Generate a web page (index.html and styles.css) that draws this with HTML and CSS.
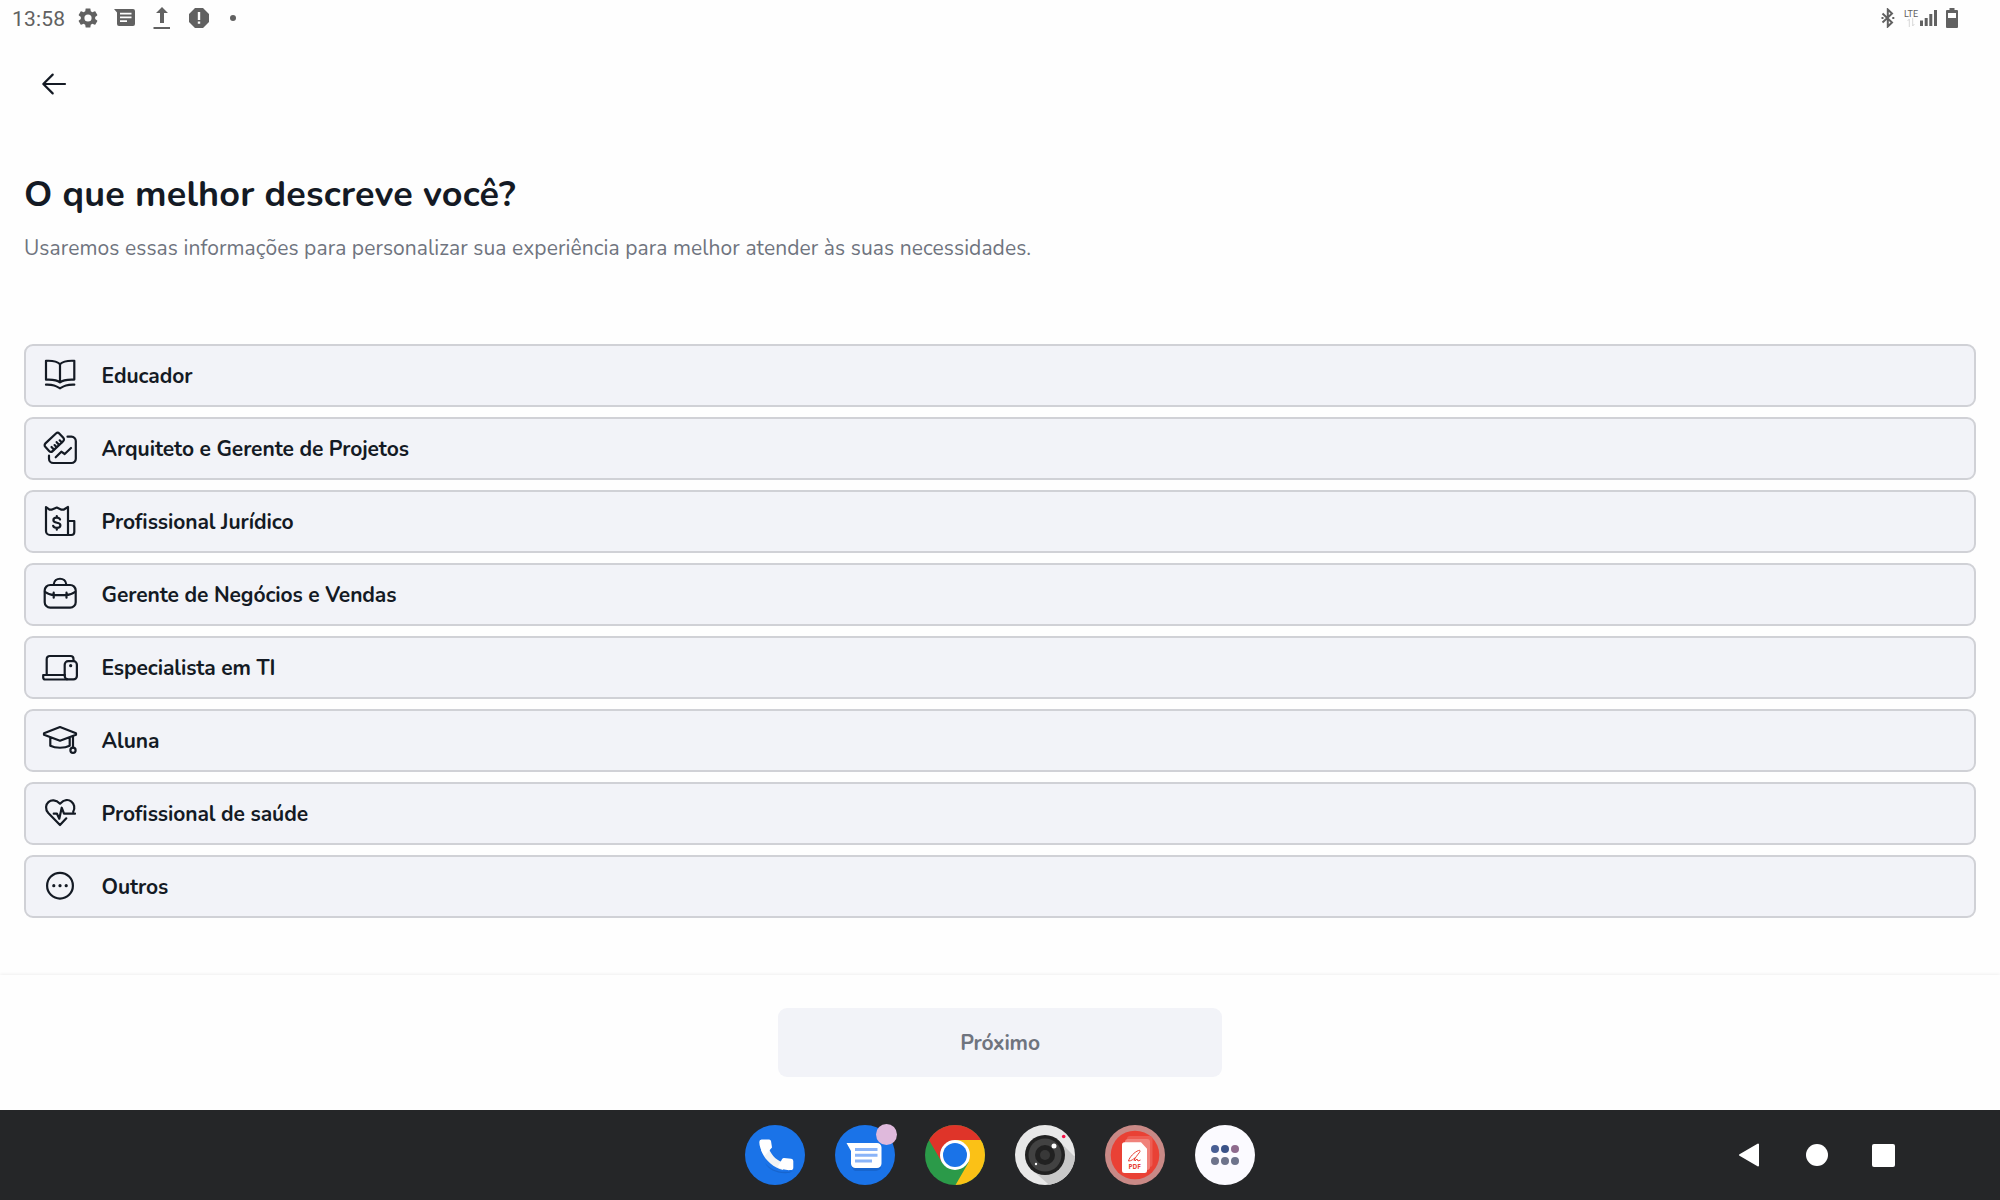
FILE: index.html
```html
<!DOCTYPE html>
<html lang="pt-BR">
<head>
<meta charset="utf-8">
<title>O que melhor descreve você?</title>
<link rel="stylesheet" href="styles.css">
</head>
<body>
<div class="statusbar">
  <div class="status-left">
    <span class="clock">13:58</span>
    <svg class="gear" width="24" height="24" viewBox="0 0 24 24"><path d="M19.140 12.940c.04-.3.06-.61.06-.94 0-.32-.02-.64-.07-.94l2.030-1.580c.18-.14.23-.41.12-.61l-1.920-3.320c-.12-.22-.37-.29-.59-.22l-2.390.96c-.5-.38-1.030-.7-1.620-.94l-.36-2.540c-.04-.24-.24-.41-.48-.41h-3.840c-.24 0-.43.17-.47.41l-.36 2.540c-.59.24-1.130.57-1.620.94l-2.390-.96c-.22-.08-.47 0-.59.22L2.740 8.870c-.12.21-.08.47.12.61l2.030 1.580c-.05.3-.09.63-.09.94s.02.64.07.94l-2.030 1.580c-.18.14-.23.41-.12.61l1.920 3.320c.12.22.37.29.59.22l2.390-.96c.5.38 1.030.7 1.620.94l.36 2.540c.05.24.24.41.48.41h3.840c.24 0 .44-.17.47-.41l.36-2.540c.59-.24 1.130-.56 1.620-.94l2.390.96c.22.08.47 0 .59-.22l1.920-3.320c.12-.22.07-.47-.12-.61l-2.010-1.580zM12 15.600A3.600 3.600 0 1 1 12 8.400a3.600 3.600 0 0 1 0 7.200z"/></svg>
    <svg class="chat" width="22" height="18" viewBox="0 0 22 18"><path fill-rule="evenodd" d="M0 0h19a2 2 0 0 1 2 2v13a2 2 0 0 1-2 2H5a2 2 0 0 1-2-2V3.500zM6 3.700v1.800h11.500V3.700zm0 3.700v1.800h11.500V7.400zm0 3.800V13h7v-1.800z"/></svg>
    <svg class="upload" width="18" height="24" viewBox="0 0 18 24"><path d="M9 1l6 6h-4v10H7V7H3zM.500 21h16.500v2H.500z"/></svg>
    <svg class="alert" width="20" height="20" viewBox="0 0 20 20"><path fill-rule="evenodd" d="M6 0h8l6 6v8l-6 6H6l-6-6V6zM8.800 4v8h2.400V4zm0 9.500v2.300h2.400v-2.300z"/></svg>
    <i class="more-dot"></i>
  </div>
  <div class="status-right">
    <svg width="14" height="20" viewBox="0 0 14 20"><path class="line" d="M1.500 5.500l9.500 9L6.800 18.500V1.500L11 5.500l-9.500 9"/><path d="M.5 9h2v2h-2zM11.300 9h2v2h-2z"/></svg>
    <div class="lte"><span>LTE</span><svg width="8" height="9" viewBox="0 0 8 9"><path d="M2.300 9V1M5.700 0v8M.6 3l1.700-2M7.400 6L5.700 8"/></svg></div>
    <svg class="signal" width="17" height="16" viewBox="0 0 17 16"><path d="M0 10.500h3V16H0zM4.700 8h3v8h-3zM9.300 4h3v12h-3zM14 0h3v16h-3z"/></svg>
    <svg width="12" height="20" viewBox="0 0 12 20"><path fill-rule="evenodd" d="M3.500 0h5v2H11a1 1 0 0 1 1 1v16a1 1 0 0 1-1 1H1a1 1 0 0 1-1-1V3a1 1 0 0 1 1-1h2.500zM2 5v5h8V5z"/></svg>
  </div>
</div>

<main class="page">
  <svg class="back" width="26" height="24" viewBox="0 0 26 24"><path d="M24 12H2.500M11.700 2.600L2.300 12l9.400 9.400"/></svg>
  <h1>O que melhor descreve você?</h1>
  <p class="lead">Usaremos essas informações para personalizar sua experiência para melhor atender às suas necessidades.</p>

  <div class="options">
    <div class="option">
      <svg viewBox="0 0 36 36"><path d="M4 4.800C10 4.500 15 5 18 8.200 21 5 26 4.500 32.300 4.800V23.600C26 23.300 21 23.600 18 26.400 15 23.600 10 23.300 4 23.600ZM18 8.200V26.400M4 28.700C12 28.500 14 30 18 32.300 22 30 24 28.500 32.300 28.700"/></svg>
      <span>Educador</span>
    </div>
    <div class="option">
      <svg viewBox="0 0 36 36"><g transform="translate(12.300 13.300) rotate(-43)"><rect x="-9.700" y="-5.300" width="19.400" height="10.600" rx="2.500"/><path d="M-5.200 5V1.500M-1.700 5V2.200M1.800 5V1.500M5.300 5V2.200"/></g><path d="M25.500 7.700h4a4.300 4.300 0 0 1 4.300 4.300v17.700a4.300 4.300 0 0 1-4.300 4.300H11.300A4.300 4.300 0 0 1 7 29.700v-3M13.700 28.300l5.600-5.600 3.400 2.300 6.300-6"/></svg>
      <span>Arquiteto e Gerente de Projetos</span>
    </div>
    <div class="option">
      <svg viewBox="0 0 36 36"><path d="M4 5l3.500 2.700h2L14.800 5.500l4.700 2.200h2L26 5v28H8a4 4 0 0 1-4-4zM26 19h6.300v11a3 3 0 0 1-3 3H26M18 17.500c-.5-1.500-1.800-1.800-3.300-1.800-2 0-3.300 1-3.300 2.500 0 3.600 7 1.500 7 5 0 1.700-1.500 2.600-3.500 2.600s-3.300-.8-3.700-2M14.800 14v1.700M14.800 25.800v1.900"/></svg>
      <span>Profissional Jurídico</span>
    </div>
    <div class="option">
      <svg viewBox="0 0 36 36"><rect x="2.700" y="10" width="31" height="22.700" rx="5.500"/><path d="M11.700 9.500C12.300 1.800 23.700 1.800 24.300 9.500M2.900 16.800c3 2 6 3.300 9 3.300h12.300c3 0 6-1.300 9-3.300M11.700 17.700v5M24.500 17.700v5"/></svg>
      <span>Gerente de Negócios e Vendas</span>
    </div>
    <div class="option">
      <svg viewBox="0 0 36 36"><path d="M4.700 27V11a3 3 0 0 1 3-3H28.500a3 3 0 0 1 3 3v2M23 27H1.200v2.500a2 2 0 0 0 2 2H25"/><rect x="22.700" y="13.200" width="12.200" height="18.200" rx="3.500"/><circle class="dot" cx="28.700" cy="17.700" r="1.600"/></svg>
      <span>Especialista em TI</span>
    </div>
    <div class="option">
      <svg viewBox="0 0 36 36"><path d="M18 6L34 12.200v1.600L18 19.700 2 13.800v-1.600ZM8.300 16.500v8.200c5 2.700 14.400 2.700 19.400 0v-8.200M31 15v11.300"/><circle cx="31" cy="29.300" r="2.600"/></svg>
      <span>Aluna</span>
    </div>
    <div class="option">
      <svg viewBox="0 0 36 36"><path d="M24.300 24.300L18 31 6.300 19C-.5 11 9.500 1 18 9.700 26.500 1 35.500 10 31.200 17.800M11.700 19.700H15l2.300 5 2.400-11 2.300 6h11"/></svg>
      <span>Profissional de saúde</span>
    </div>
    <div class="option">
      <svg viewBox="0 0 36 36"><circle cx="18" cy="18.700" r="12.900"/><g class="dot"><circle cx="11.800" cy="18.700" r="1.600"/><circle cx="18" cy="18.700" r="1.600"/><circle cx="24.200" cy="18.700" r="1.600"/></g></svg>
      <span>Outros</span>
    </div>
  </div>
</main>

<footer class="footer"><button class="next">Próximo</button></footer>

<nav class="taskbar">
  <div class="apps">
    <svg viewBox="0 0 60 60"><circle cx="30" cy="30" r="30" fill="#1a73e8"/><path fill="#155bbd" opacity=".6" d="M20 38c8 9 18 10 28 8l-4 2c-12 1-20-3-24-10z"/><path fill="#f1f3f4" d="M16 25c3 9 12 18 22 20l2-7C32 36 27 31 24 24z"/><path fill="#fff" d="M16.500 14.600h7.500a2 2 0 0 1 2 1.500l1 6.500-7.500 8.400C16 26 14.300 21 14.300 17a2.400 2.400 0 0 1 2.200-2.400zM39 33l7.300.8a2.200 2.200 0 0 1 2 2.200v6.500a2.600 2.600 0 0 1-2.600 2.600c-5 .3-9-.6-13-3l4.300-7.800A2.400 2.400 0 0 1 39 33z"/></svg>
    <div class="app-badged">
      <svg viewBox="0 0 60 60"><circle cx="30" cy="30" r="30" fill="#1a73e8"/><path fill="#155bbd" opacity=".6" d="M17 42h29v1q-2 3-5 3H21q-3 0-4-4z"/><path fill="#fff" d="M11.500 18H42a4.500 4.500 0 0 1 4.500 4.500v16A4.500 4.500 0 0 1 42 43H20.500a4.500 4.500 0 0 1-4.500-4.500V26z"/><path fill="#8ab4f8" d="M20 23h22.500v3H20zM20 28.700h22.500v3H20zM20 34.400h17v3H20z"/></svg>
      <i class="badge"></i>
    </div>
    <svg viewBox="0 0 60 60"><defs><clipPath id="disc"><circle cx="30" cy="30" r="30"/></clipPath></defs><g clip-path="url(#disc)"><path fill="#2b9a49" d="M0 0h60v60H0z"/><path fill="#fbc116" d="M30 15h30v45H30.500l13-22.500z"/><path fill="#df3429" d="M0 0h60v15H30L17 37.500 4 15z"/></g><circle cx="30" cy="30" r="15" fill="#fff"/><circle cx="30" cy="30" r="12" fill="#1a73e8"/></svg>
    <svg viewBox="0 0 60 60"><circle cx="30" cy="30" r="30" fill="#e8e8e8"/><path fill="#c8c8c8" d="M44 16L60 32A30 30 0 0 1 34 59.700L15 43z"/><circle cx="30" cy="30" r="20" fill="#212121"/><circle cx="30" cy="30" r="16.500" fill="#424242"/><circle cx="30" cy="30" r="10" fill="#212121"/><circle cx="30" cy="30" r="5" fill="#383838"/><circle cx="39" cy="21" r="2.500" fill="#fff"/><circle cx="21" cy="39" r="1.200" fill="#fff"/><circle cx="48.700" cy="11.500" r="1.800" fill="#f50f45"/></svg>
    <svg viewBox="0 0 60 60"><circle cx="30" cy="30" r="30" fill="#c98986"/><circle cx="30" cy="30" r="24.300" fill="#e94135"/><rect x="22" y="11" width="25.500" height="31" rx="3" fill="#ed5c52"/><rect x="20" y="14" width="25" height="31" rx="3" fill="#f0827b"/><path fill="#fff" d="M19.500 17.200H36l6 6.500V45.500a2.500 2.500 0 0 1-2.500 2.500h-20a2.500 2.500 0 0 1-2.500-2.500V19.700a2.500 2.500 0 0 1 2.500-2.500z"/><path fill="none" stroke="#e94135" stroke-width="1" d="M23.500 36c1-4 6-9 10-10.500 2-.6 2 .8.500 2.500-2 2.500-4 5-5 7.500M23.500 36c3 0 5-2 6-3l.5 3 2-2 1 2 2.500-1"/><text x="29.700" y="44" text-anchor="middle" class="pdf">PDF</text></svg>
    <svg viewBox="0 0 60 60"><circle cx="30" cy="30" r="30" fill="#fbfaff"/><g fill="#6d738b"><circle cx="20" cy="36" r="4"/><circle cx="30" cy="36" r="4"/><circle cx="40" cy="36" r="4"/></g><circle cx="20" cy="24" r="4" fill="#485e94"/><circle cx="30" cy="24" r="4" fill="#3a5288"/><circle cx="40" cy="24" r="4" fill="#8e6a8d"/></svg>
  </div>
  <div class="navkeys">
    <svg width="22" height="26" viewBox="0 0 22 26"><path d="M2 13L20 2.500v21z" fill="#fff" stroke="#fff" stroke-width="2" stroke-linejoin="round"/></svg>
    <i class="home"></i>
    <i class="recent"></i>
  </div>
</nav>
</body>
</html>
```
FILE: styles.css
```css
* { box-sizing: border-box; }
body {
  margin: 0;
  width: 2000px;
  height: 1200px;
  overflow: hidden;
  display: flex;
  flex-direction: column;
  background: #fefefe;
  color: #141a24;
  font-family: Nunito, Lato, sans-serif;
}
svg { display: block; flex: none; }

.statusbar {
  height: 36px;
  flex: none;
  display: flex;
  justify-content: space-between;
  padding: 0 42px 0 12px;
  fill: #616161;
  color: #616161;
}
.status-left, .status-right { display: flex; align-items: center; }
.clock { width: 64px; font: 21px/36px Roboto, sans-serif; padding-top: 1px; letter-spacing: .2px; }
.chat { margin-left: 14px; }
.upload { margin-left: 17px; }
.alert { margin-left: 18px; }
.more-dot { width: 6px; height: 6px; margin-left: 21px; border-radius: 50%; background: #616161; }
.line { fill: none; stroke: #616161; stroke-width: 2; }
.lte {
  width: 16px;
  height: 16px;
  margin: 0 1px 0 8px;
  display: flex;
  flex-direction: column;
  align-items: center;
  font: 9px/8px Roboto, sans-serif;
}
.lte path { fill: none; stroke: #d8d8d8; }
.signal { margin-right: 9px; }

.page { flex: none; height: 939px; padding: 36px 24px 0; }
.back { margin-left: 17px; }
.back path, .option svg {
  fill: none;
  stroke: #141a24;
  stroke-width: 2.2;
  stroke-linecap: round;
  stroke-linejoin: round;
}
h1 {
  margin: 75px 0 0;
  font-size: 36px;
  line-height: 48px;
  font-weight: 700;
  letter-spacing: .2px;
}
.lead {
  margin: 14px 0 0;
  font-size: 21px;
  line-height: 30px;
  letter-spacing: .08px;
  color: #6f747e;
}
.options { margin-top: 81px; display: flex; flex-direction: column; gap: 10px; }
.option {
  height: 63px;
  display: flex;
  align-items: flex-start;
  gap: 23.5px;
  padding: 10px 16px;
  border: 2px solid #d0d1d6;
  border-radius: 9px;
  background: #f2f3f8;
  font-size: 21px;
  line-height: 41px;
  font-weight: 700;
  letter-spacing: -.08px;
  font-variant-ligatures: common-ligatures;
}
.option svg { width: 36px; height: 36px; }
.option .dot { fill: #141a24; stroke: none; }

.footer {
  flex: none;
  height: 135px;
  padding-top: 33px;
  display: flex;
  justify-content: center;
  align-items: flex-start;
  background: #fefefe;
  box-shadow: 0 -1px 3px rgba(0, 0, 0, .06);
}
.next {
  width: 444px;
  height: 69px;
  padding: 1px 0 0;
  border: 0;
  border-radius: 9px;
  background: #f2f3f8;
  color: #6f747e;
  font: 700 21px/40px Nunito, Lato, sans-serif;
  letter-spacing: -.15px;
}

.taskbar {
  flex: none;
  height: 90px;
  display: flex;
  align-items: center;
  background: #252628;
}
.apps { display: flex; gap: 30px; margin-left: 745px; }
.apps svg { width: 60px; height: 60px; }
.app-badged { position: relative; }
.badge {
  position: absolute;
  right: -2px;
  top: -1px;
  width: 21px;
  height: 21px;
  border-radius: 50%;
  background: #dfb9dc;
}
.pdf { font: 700 6.500px "Noto Sans", sans-serif; fill: #e94135; }
.navkeys { display: flex; align-items: center; margin-left: 483px; }
.home { width: 22px; height: 22px; margin-left: 46px; border-radius: 50%; background: #fff; }
.recent { width: 23px; height: 23px; margin-left: 43.500px; border-radius: 2px; background: #fff; }
```
